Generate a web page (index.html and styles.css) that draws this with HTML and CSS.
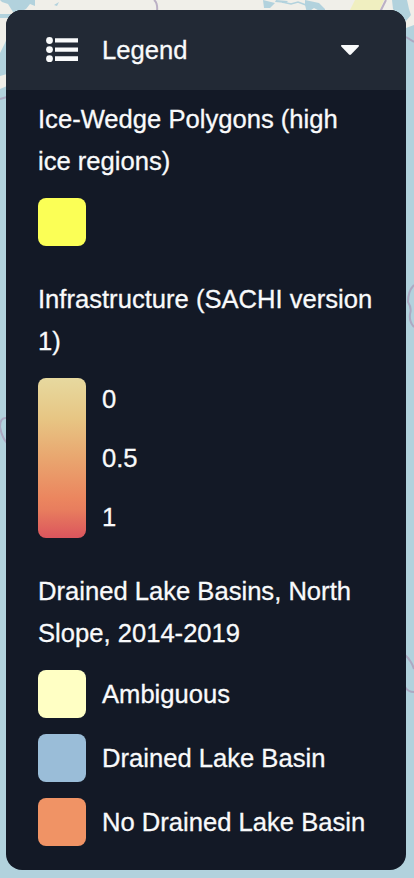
FILE: index.html
```html
<!DOCTYPE html>
<html lang="en">
<head>
<meta charset="utf-8">
<title>Legend</title>
<link rel="stylesheet" href="styles.css">
</head>
<body>
<svg class="map" viewBox="0 0 414 878" aria-hidden="true">
  <path class="land" d="M0 0H414V25L406 28L398 20L390 14H0Z"/>
  <path class="land" d="M0 18H14V34Q7 35 5 43L0 53ZM0 76L7 74V86L0 89Z"/>
  <path class="water" d="M0 0H35V6L30 4L26 9L20 12H13L8 4L2 2ZM54 5L59 2L57 6ZM263 0L275 3L270 8L264 8ZM276 0L288 1L286 3L275 2ZM305 0L319 3L325 9V14L314 8L307 13L305 5ZM392 0H407L409 9L411 15L406 21L398 15L393 9Z"/>
  <path class="stream" d="M282 2L291 4L298 2L306 5"/>
  <path class="field" d="M355 0H384L379 12H349Z"/>
  <path class="border" d="M154 0Q158 3 157 12M386 0L380 12M406 37L414 42M0 99L7 97M414 285Q408 291 408 302Q412 308 410 314Q409 322 414 327M7 418Q0 417 0 427Q2 438 7 443M405 655Q411 660 414 669M405 687Q408 692 414 692"/>
</svg>
<main class="panel">
  <header class="header">
    <svg class="list-icon" viewBox="0 0 32 26" aria-hidden="true">
      <circle cx="3.5" cy="3.5" r="3.4"/><circle cx="3.5" cy="12.6" r="3.4"/><circle cx="3.5" cy="21.7" r="3.4"/>
      <path d="M9 1.2H32V5.6H9ZM9 10.4H32V14.8H9ZM9 19.3H32V23.9H9Z"/>
    </svg>
    <h1 class="title">Legend</h1>
    <svg class="caret" viewBox="0 0 18 10" aria-hidden="true"><path d="M.8 0H17.2Q18.6 .5 17.5 1.7L10 9.5Q9 10.4 8 9.5L.5 1.7Q-.6 .5 .8 0Z"/></svg>
  </header>
  <div class="body">
    <section class="layer">
      <h2 class="name">Ice-Wedge Polygons (high ice regions)</h2>
      <div class="swatch yellow"></div>
    </section>
    <section class="layer">
      <h2 class="name">Infrastructure (SACHI version 1)</h2>
      <div class="scale">
        <div class="ramp"></div>
        <div class="ticks"><span>0</span><span>0.5</span><span>1</span></div>
      </div>
    </section>
    <section class="layer">
      <h2 class="name">Drained Lake Basins, North Slope, 2014-2019</h2>
      <ul class="items">
        <li class="item"><span class="swatch cream"></span>Ambiguous</li>
        <li class="item"><span class="swatch blue"></span>Drained Lake Basin</li>
        <li class="item"><span class="swatch orange"></span>No Drained Lake Basin</li>
      </ul>
    </section>
  </div>
</main>
</body>
</html>
```
FILE: styles.css
```css
* { box-sizing: border-box; }
body {
  margin: 0;
  height: 878px;
  padding: 10px 8px 8px 6px;
  overflow: hidden;
  background: #b2d2dd;
  color: #f9fafb;
  font: 25.6px/42px "Liberation Sans", Arial, sans-serif;
  -webkit-text-stroke: .3px #f9fafb;
}
.map { position: absolute; left: 0; top: 0; width: 414px; height: 878px; }
.land { fill: #f0efe9; }
.water { fill: #b2d2dd; }
.stream { fill: none; stroke: #b2d2dd; stroke-width: 1.5; }
.field { fill: #f0efc0; }
.border { fill: none; stroke: #aa9bb8; stroke-width: 2; opacity: .75; }
.panel {
  position: relative;
  height: 860px;
  overflow: hidden;
  border-radius: 16px;
  background: #131926;
}
.header {
  display: flex;
  align-items: center;
  height: 80px;
  padding: 0 47px 0 40px;
  background: #222935;
}
.list-icon { width: 32px; height: 26px; fill: #f9fafb; }
.title { margin: 0 auto 0 24px; font-size: inherit; font-weight: 400; }
.caret { width: 18px; height: 10px; fill: #f9fafb; }
.body { padding: 8px 32px 0; }
.layer { margin-bottom: 32px; }
.name { margin: 0 0 16px; font-size: inherit; font-weight: 400; }
.swatch { flex: none; width: 48px; height: 48px; border-radius: 8px; }
.yellow { background: #fbff56; }
.cream { background: #ffffc4; }
.blue { background: #9abdd8; }
.orange { background: #f09365; }
.scale { display: flex; gap: 16px; height: 160px; }
.ramp {
  width: 48px;
  border-radius: 8px;
  background: linear-gradient(#e7d99f, #e7c684 25%, #e9a66f 50%, #eb865f 75%, #e87e5e 82%, #db555d);
}
.ticks { display: flex; flex-direction: column; justify-content: space-between; }
.items { display: flex; flex-direction: column; gap: 16px; margin: 0; padding: 0; list-style: none; }
.item { display: flex; align-items: center; gap: 16px; height: 48px; white-space: nowrap; }
```
